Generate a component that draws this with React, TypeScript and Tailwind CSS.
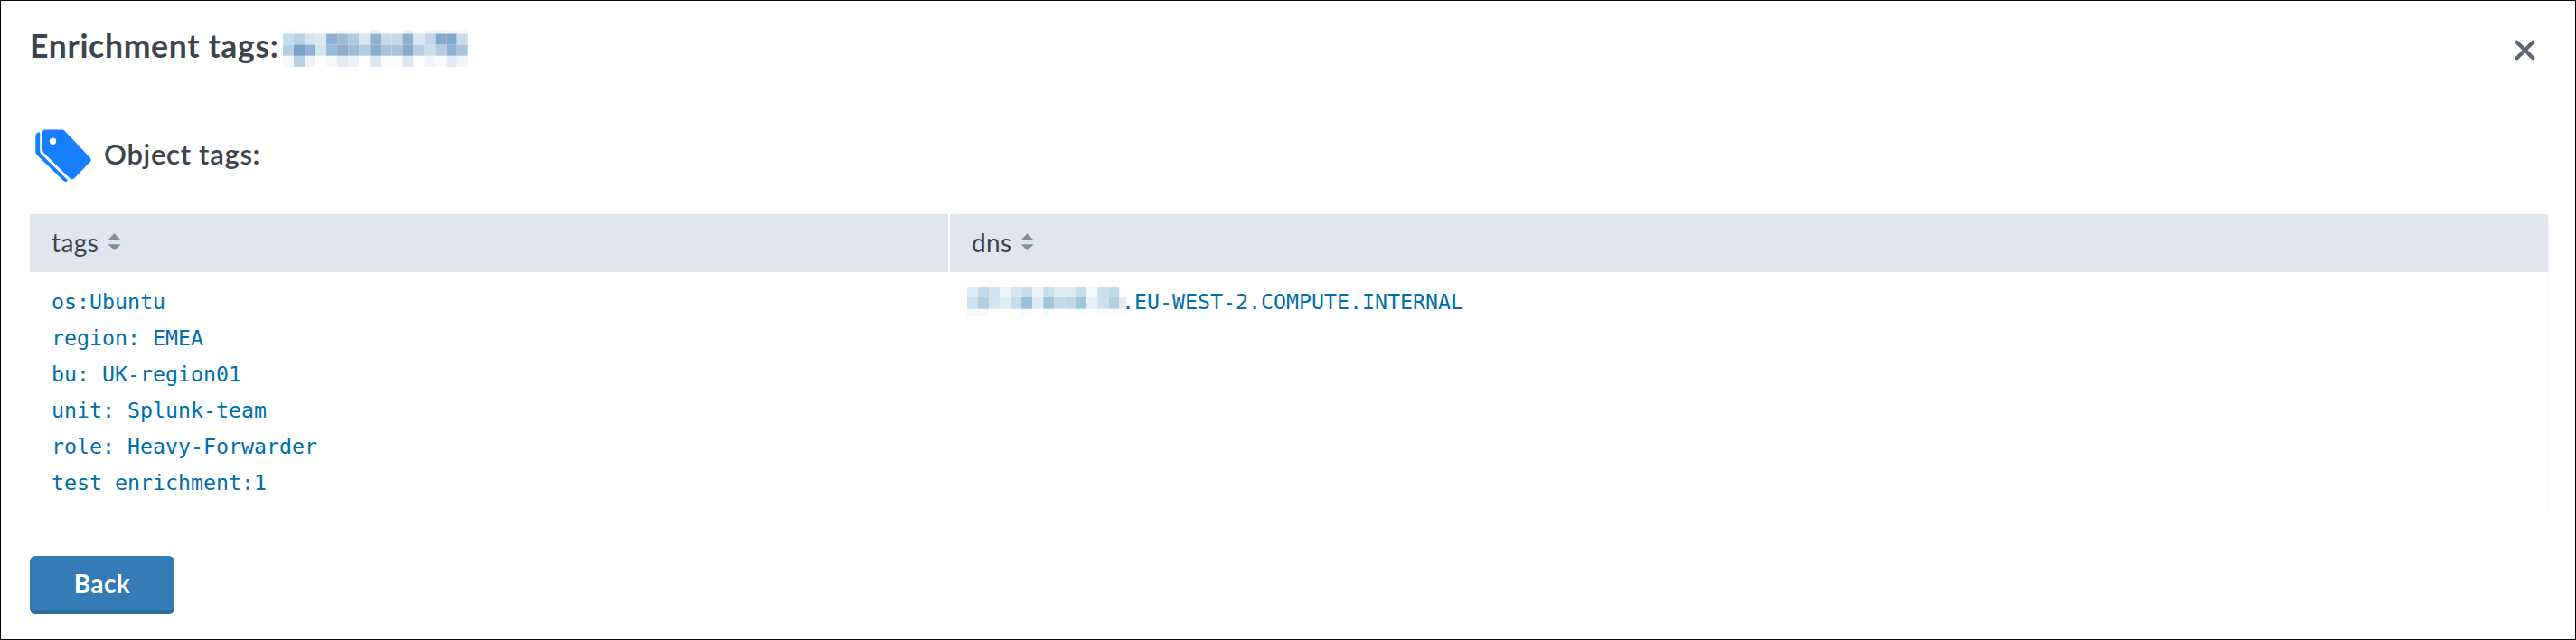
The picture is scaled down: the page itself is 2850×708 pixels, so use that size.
import React from "react";

const titleMosaic = {
  cell: 12.04,
  rows: [
    { y: 0, h: 4.5, colors: ["#fbfcfd", "#fcfdfe", "#fff", "#fff", "#fdfeff", "#f3f6fa", "#f9fafc", "#fff", "#eff4f8", "#fff", "#fff", "#eff4f8", "#fff", "#eff4f7", "#eff4f8", "#f1f4f8", "#f6f8fb"] },
    { y: 4.5, h: 12, colors: ["#c9dbe8", "#bbd0e4", "#d7e3ef", "#dde9f1", "#8eb1d4", "#9dbcd7", "#b0c9e0", "#dce6f1", "#91b3d3", "#c9d9e8", "#c6d7e7", "#91b2d3", "#dce6f0", "#c4d6e7", "#85aace", "#82a8cb", "#cbdbe9"] },
    { y: 16.5, h: 12.3, colors: ["#b6cfe3", "#79a2c9", "#8fb1d4", "#d5e4ed", "#9abad6", "#8bafd1", "#9fbdd8", "#b3cbe1", "#88afcf", "#acc5df", "#abc5de", "#87abcf", "#b8cee2", "#cbdcea", "#b4cbe1", "#92b2d5", "#abc4de"] },
    { y: 28.8, h: 12, colors: ["#f3f8fb", "#bad0e5", "#eef3fb", "#fff", "#f5f9fc", "#e3ebf5", "#edf3f7", "#fff", "#dce8f1", "#fafbfe", "#fafbfe", "#dce7f1", "#fff", "#eff4f8", "#fafbfd", "#e1e9f4", "#f1f6f9"] },
  ],
};

const dnsMosaic = {
  cell: 12.03,
  rows: [
    { y: 0, h: 12, colors: ["#deebf3", "#c1d9e8", "#d1e4ef", "#ebf4f8", "#d6e6f0", "#c7deea", "#e8f1f8", "#c9dfeb", "#dcebf2", "#dceaf2", "#c8deea", "#f2f8fb", "#c9dfec", "#c2d9e8", "#fff"] },
    { y: 12, h: 12.8, colors: ["#cfe1ee", "#afd0e3", "#d4e6ef", "#e2eef4", "#c7deea", "#98c0dc", "#dcebf4", "#a0c6de", "#c3dbe8", "#c1d9e7", "#a0c6de", "#e8f1f8", "#cee0ec", "#b2d1e3", "#e2edf4"] },
    { y: 24.8, h: 8, colors: ["#f4f8fb", "#f5f9fc", "#fff", "#fff", "#fdfeff", "#f6fbfc", "#fff", "#f6fbfc", "#fdfeff", "#fdfeff", "#f9fcfd", "#fff", "#fbfdfd", "#f8fcfc", "#f9fcfd"] },
  ],
};

type MosaicData = typeof titleMosaic;

function Mosaic({ data, width, height, className }: { data: MosaicData; width: number; height: number; className: string }) {
  return (
    <svg className={className} width={width} height={height} viewBox={`0 0 ${width} ${height}`} aria-hidden="true">
      {data.rows.map((row, r) =>
        row.colors.map((fill, c) => (
          <rect key={`${r}-${c}`} x={c * data.cell} y={row.y} width={data.cell + 0.1} height={row.h + 0.1} fill={fill} />
        )),
      )}
    </svg>
  );
}

function SortIcon({ className }: { className: string }) {
  return (
    <svg className={className} width="15" height="20" viewBox="0 0 15 20" fill="#818d99" aria-hidden="true">
      <path d="M7.5 0.3 L14.5 7.4 H0.5 Z" />
      <path d="M7.5 19.3 L14.5 12.2 H0.5 Z" />
    </svg>
  );
}

function TagsIcon() {
  return (
    <svg className="shrink-0" width="64" height="60" viewBox="0 0 64 60" fill="#177fff" aria-hidden="true">
      <path d="M11 0.5 H29.8 Q31.3 0.5 32.5 1.7 L61.2 32 Q62.6 33.7 61.2 35.4 L43.5 54 Q41 56.4 38.5 54.5 L9.3 26 Q8 24.5 8 22.8 V3.5 Q8 0.5 11 0.5 Z M19.5 9.6 A3.7 3.7 0 1 0 19.5 17 A3.7 3.7 0 1 0 19.5 9.6 Z" fillRule="evenodd" />
      <path d="M5.2 3.3 V24 Q5.2 25.9 6.4 27.2 L36.2 56.6 Q34 59 31.2 57 L1.6 28.2 Q0.3 26.5 0.3 24.5 V7.5 Q0.6 3.5 5.2 3.3 Z" />
    </svg>
  );
}

const tags = ["os:Ubuntu", "region: EMEA", "bu: UK-region01", "unit: Splunk-team", "role: Heavy-Forwarder", "test enrichment:1"];

export default function App() {
  return (
    <main className="flex h-[708px] w-[2850px] flex-col border border-black bg-white pr-[30px] pl-8 font-['Lato','Open_Sans',sans-serif] text-[#3c444d]">
      <header className="flex h-[105px] items-start justify-between">
        <div className="flex items-start">
          <h1 className="w-[280px] pt-[29px] text-[35.5px] leading-[42px] font-bold tracking-[0.7px] whitespace-nowrap">Enrichment tags:</h1>
          <Mosaic data={titleMosaic} width={205} height={41} className="mt-8 shrink-0" />
        </div>
        <button aria-label="Close" className="mt-[43px] mr-[14px]">
          <svg width="23" height="23" viewBox="0 0 23 23" fill="none" stroke="#5c6773" strokeWidth="4.2" strokeLinecap="round">
            <path d="M2.7 2.7 L20.3 20.3 M20.3 2.7 L2.7 20.3" />
          </svg>
        </button>
      </header>

      <section className="flex h-[131px] items-start pt-[37px] pl-[6px]">
        <TagsIcon />
        <h2 className="ml-[12px] pt-[8px] text-[31px] leading-[38px] font-semibold tracking-[0.7px] whitespace-nowrap">Object tags:</h2>
      </section>

      <section className="h-[328px] w-[2787px] border-r border-[#f7f8fa]">
        <div className="flex h-16 gap-[2px] text-[28px] leading-8">
          <div className="flex w-[1016px] items-start bg-[#e1e6ee] pt-[15px] pl-[24px]">
            <span className="w-[62px] tracking-[0.4px]">tags</span>
            <SortIcon className="mt-[6px]" />
          </div>
          <div className="flex flex-1 items-start bg-[#e1e6ee] pt-[15px] pl-[24px]">
            <span className="w-[54px] tracking-[0.4px]">dns</span>
            <SortIcon className="mt-[6px]" />
          </div>
        </div>
        <div className="flex font-['DejaVu_Sans_Mono',monospace] text-[23.25px] leading-10 text-[#006eaa]">
          <ul className="w-[1037px] pt-[13px] pl-[24px]">
            {tags.map((tag) => (
              <li key={tag} className="h-10 whitespace-pre">{tag}</li>
            ))}
          </ul>
          <div className="flex items-start">
            <Mosaic data={dnsMosaic} width={176} height={33} className="mt-4 shrink-0" />
            <span className="-ml-[5px] pt-[13px]">.EU-WEST-2.COMPUTE.INTERNAL</span>
          </div>
        </div>
      </section>

      <div className="mt-[50px]">
        <button className="flex h-16 w-40 items-center justify-center rounded-[6px] border-b-4 border-[#2e6da4] bg-[#337ab7] text-[28px] leading-8 font-bold tracking-[0.4px] text-white">
          Back
        </button>
      </div>
    </main>
  );
}
